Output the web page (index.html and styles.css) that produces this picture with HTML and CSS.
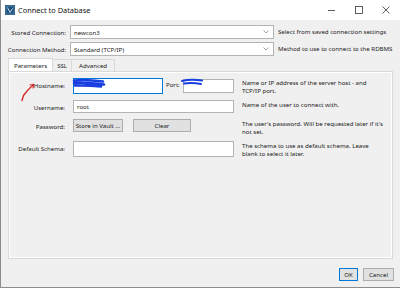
FILE: index.html
```html
<!DOCTYPE html>
<html lang="en">
<head>
    <meta charset="UTF-8">
    <title>Connect to Database</title>
    <link rel="stylesheet" href="styles.css">
</head>
<body>
    <div class="window">
        <div class="titlebar">
            <svg class="app-icon" width="10" height="10" viewBox="0 0 10 10">
                <rect x="0" y="0" width="10" height="10" fill="#1f4f7a"/>
                <rect x="1" y="1" width="8" height="8" fill="none" stroke="#6fa3c8" stroke-width="0.6"/>
                <path d="M2.5 2.5 L5 7.5 L7.5 3.5" fill="none" stroke="#cfe3f1" stroke-width="0.9"/>
            </svg>
            <span class="title">Connect to Database</span>
            <div class="win-controls">
                <svg width="8" height="8" viewBox="0 0 8 8"><line x1="0" y1="4.5" x2="7" y2="4.5" stroke="#333" stroke-width="0.8"/></svg>
                <svg width="8" height="8" viewBox="0 0 8 8"><rect x="0.5" y="0.5" width="7" height="7" fill="none" stroke="#333" stroke-width="0.8"/></svg>
                <svg width="8" height="8" viewBox="0 0 8 8"><path d="M0.5 0.5 L7.5 7.5 M7.5 0.5 L0.5 7.5" stroke="#333" stroke-width="0.8"/></svg>
            </div>
        </div>

        <div class="content">
            <div class="top-grid">
                <span class="label">Stored Connection:</span>
                <div class="combo">newcon3
                    <svg class="chevron" width="6" height="4" viewBox="0 0 6 4"><path d="M0.5 0.5 L3 3 L5.5 0.5" fill="none" stroke="#777" stroke-width="0.7"/></svg>
                </div>
                <span class="hint">Select from saved connection settings</span>

                <span class="label">Connection Method:</span>
                <div class="combo">Standard (TCP/IP)
                    <svg class="chevron" width="6" height="4" viewBox="0 0 6 4"><path d="M0.5 0.5 L3 3 L5.5 0.5" fill="none" stroke="#777" stroke-width="0.7"/></svg>
                </div>
                <span class="hint">Method to use to connect to the RDBMS</span>
            </div>

            <div class="tabs">
                <div class="tab active">Parameters</div>
                <div class="tab">SSL</div>
                <div class="tab">Advanced</div>
            </div>

            <div class="panel">
                <div class="param-grid">
                    <span class="label">Hostname:</span>
                    <div class="host-row">
                        <div class="input host focused"></div>
                        <span class="port-label">Port:</span>
                        <div class="input port"></div>
                    </div>
                    <span class="hint">Name or IP address of the server host - and TCP/IP port.</span>

                    <span class="label">Username:</span>
                    <div class="input user">root</div>
                    <span class="hint">Name of the user to connect with.</span>

                    <span class="label">Password:</span>
                    <div class="btn-row">
                        <button class="btn vault">Store in Vault ...</button>
                        <button class="btn clear">Clear</button>
                    </div>
                    <span class="hint">The user's password. Will be requested later if it's not set.</span>

                    <span class="label">Default Schema:</span>
                    <div class="input schema"></div>
                    <span class="hint">The schema to use as default schema. Leave blank to select it later.</span>
                </div>
            </div>

            <div class="footer">
                <button class="btn ok">OK</button>
                <button class="btn cancel">Cancel</button>
            </div>
        </div>

        <!-- hand-drawn marks on top of the screenshot -->
        <svg class="marks" width="400" height="288" viewBox="0 0 400 288">
            <path d="M22 100.5 L23.5 95.5 Q27 90.5 33.5 84.5" fill="none" stroke="#d42a2a" stroke-width="1.4" stroke-linecap="round"/>
            <path d="M30 85 L33.5 84.5 L33 88" fill="none" stroke="#d42a2a" stroke-width="1.2" stroke-linecap="round"/>
            <path d="M74 80.5 C82 79.5 92 80 103 81.5 M74 83 C84 82.5 94 83 104 84.5 M75 85.5 C85 85 92 85.5 101 86.5" fill="none" stroke="#1a3fe0" stroke-width="2.6" stroke-linecap="round"/>
            <path d="M182 81 C188 79.5 195 79.5 202 80.5 M184 83.5 C190 82.5 196 83 201 84" fill="none" stroke="#1a3fe0" stroke-width="2" stroke-linecap="round"/>
        </svg>
    </div>
</body>
</html>
```

FILE: styles.css
```css
* {
    margin: 0;
    padding: 0;
    box-sizing: border-box;
}

body {
    width: 400px;
    height: 288px;
    overflow: hidden;
    font-family: 'Noto Sans', 'Open Sans', sans-serif;
    font-size: 6.1px;
    color: #1a1a1a;
    background: #f0f0f0;
}

.window {
    position: relative;
    width: 400px;
    height: 288px;
    display: flex;
    flex-direction: column;
    border-left: 1px solid #8c8c8c;
    border-bottom: 1px solid #8c8c8c;
    background: #f0f0f0;
}

.titlebar {
    height: 20px;
    background: #fff;
    display: flex;
    align-items: center;
    padding-left: 4px;
}

.app-icon {
    margin-right: 3px;
}

.title {
    font-size: 7.4px;
    color: #111;
}

.win-controls {
    margin-left: auto;
    display: flex;
    gap: 19px;
    padding-right: 10px;
}

.content {
    flex: 1;
    display: flex;
    flex-direction: column;
    padding-top: 5px;
}

.top-grid {
    display: grid;
    grid-template-columns: 62px 204px 1fr;
    grid-auto-rows: 14px;
    column-gap: 4px;
    row-gap: 3px;
    padding-left: 3px;
    align-items: center;
}

.label {
    text-align: right;
    white-space: nowrap;
}

.combo {
    height: 14px;
    background: #fff;
    border: 1px solid #b4b4b4;
    display: flex;
    align-items: center;
    padding-left: 3px;
}

.chevron {
    margin-left: auto;
    margin-right: 4px;
}

.hint {
    white-space: normal;
    line-height: 7.6px;
}

.tabs {
    display: flex;
    margin-top: 3px;
    padding-left: 8px;
    height: 12px;
    position: relative;
    z-index: 1;
}

.tab {
    height: 12px;
    padding: 0 4px;
    border: 1px solid #d9d9d9;
    border-bottom: none;
    background: #f0f0f0;
    display: flex;
    align-items: center;
    margin-left: -1px;
}

.tab.active {
    background: #fff;
    height: 13px;
    margin-top: -1px;
    padding: 0 5px;
}

.tab:nth-child(3) {
    padding: 0 7px;
}

.panel {
    flex: 1;
    margin: 0 7px 0 7px;
    border: 1px solid #d9d9d9;
    box-shadow: inset 1px 1px 0 #fff, inset -1px -1px 0 #fff;
    padding-top: 6px;
}

.param-grid {
    display: grid;
    grid-template-columns: 56px 161px 1fr;
    column-gap: 8px;
    row-gap: 6px;
    align-items: start;
    padding-right: 6px;
}

.param-grid .label {
    padding-top: 3px;
}

.param-grid .hint {
    padding-top: 1px;
}

.input {
    height: 14px;
    background: #fff;
    border: 1px solid #b4b4b4;
    display: flex;
    align-items: center;
    padding-left: 3px;
}

.host-row {
    display: flex;
    align-items: center;
    height: 16px;
}

.input.host {
    width: 90px;
    height: 16px;
}

.input.focused {
    border-color: #0078d7;
}

.port-label {
    margin: 0 2px 0 3px;
    align-self: flex-start;
    padding-top: 2px;
}

.input.port {
    flex: 1;
    margin-left: 1px;
}

.input.user {
    height: 13px;
}

.input.schema {
    height: 16px;
}

.btn-row {
    display: flex;
    gap: 10px;
}

.btn {
    height: 13px;
    font-family: inherit;
    font-size: 6.1px;
    color: #1a1a1a;
    background: #e1e1e1;
    border: 1px solid #adadad;
}

.btn.vault {
    width: 50px;
}

.btn.clear {
    width: 58px;
}

.footer {
    height: 28px;
    display: flex;
    justify-content: flex-end;
    gap: 5px;
    padding: 9px 6px 0 0;
}

.btn.ok {
    width: 19px;
    border: 1px solid #0078d7;
}

.btn.cancel {
    width: 31px;
}

.marks {
    position: absolute;
    left: -1px;
    top: 0;
    pointer-events: none;
}
```
